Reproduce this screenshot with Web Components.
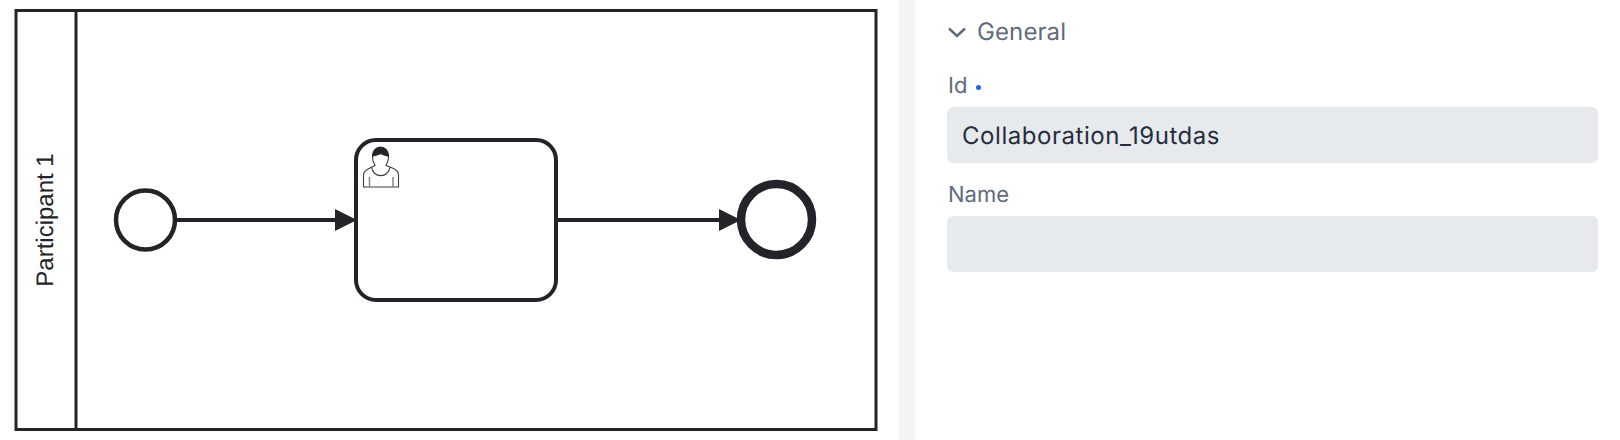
<!DOCTYPE html>
<html>
<head>
<meta charset="utf-8">
<title>Process editor</title>
<style>
  html, body { margin: 0; padding: 0; background: #fff; }
</style>
</head>
<body>
<bpmn-editor>
  <bpmn-canvas slot="canvas"></bpmn-canvas>
  <props-panel slot="panel">
    <props-group label="General">
      <props-field label="Id" value="Collaboration_19utdas" changed></props-field>
      <props-field label="Name"></props-field>
    </props-group>
  </props-panel>
</bpmn-editor>

<script>
class BpmnEditor extends HTMLElement {
  constructor() {
    super();
    this.attachShadow({ mode: 'open' });
    this.shadowRoot.innerHTML = `
      <style>
        :host { display: flex; width: 1620px; height: 440px; overflow: hidden; background: #fff; }
        .canvas { display: block; flex: 0 0 899px; }
        .divider { flex: 0 0 16px; background: #f3f4f6; }
        .panel { display: block; flex: 1; min-width: 0; }
      </style>
      <div class="canvas"><slot name="canvas"></slot></div>
      <div class="divider"></div>
      <div class="panel"><slot name="panel"></slot></div>
    `;
  }
}

class BpmnCanvas extends HTMLElement {
  constructor() {
    super();
    this.attachShadow({ mode: 'open' });
    this.shadowRoot.innerHTML = `
      <style>
        :host { display: block; width: 899px; height: 440px; }
        svg { display: block; }
        text { font-family: "Liberation Sans", Arial, sans-serif; font-size: 24px; fill: #22242a; text-rendering: geometricPrecision; }
      </style>
      <svg width="899" height="440" viewBox="0 0 899 440" fill="none" stroke="#22242a">
        <rect x="16" y="10.5" width="860" height="419" stroke-width="3"/>
        <path d="M76 10V430" stroke-width="3"/>
        <text transform="translate(53 220) rotate(-90)" text-anchor="middle" stroke="none">Participant 1</text>

        <circle cx="145.5" cy="220" r="29.5" stroke-width="4.5" fill="#fff"/>
        <path d="M177 220H337" stroke-width="4"/>
        <path d="M335 209L357 220L335 231Z" fill="#22242a" stroke="none"/>

        <rect x="356" y="140" width="200" height="160" rx="20" stroke-width="4" fill="none"/>
        <g stroke-width="1.1" stroke="#3a3c42" fill="#fff">
          <path d="M363.5 187V175C363.5 171.5 366 170 369 168.500L375 165.500C373.500 163 372.500 160 372.500 157C372.500 152 376 148.500 380.500 148.500C385 148.500 388.500 152 388.500 157C388.500 160 387.500 163 386 165.500L393.500 168.500C396.500 170 398.500 171.500 398.500 175V187Z"/>
          <path d="M372.500 156C375 155.500 378 155 380.500 153.500C383 155 386 155.500 388.500 156C388.500 151 385 147 380.500 147C376 147 372.500 151 372.500 156Z" fill="#22242a" stroke="#22242a"/>
          <path d="M371.500 167C373 178.500 388.500 178.500 390 167" fill="none"/>
          <path d="M369.500 177V187M393 177V187" fill="none" stroke="#85878b" stroke-width="1.500"/>
        </g>

        <path d="M557 220H721" stroke-width="4"/>
        <path d="M719 209L741 220L719 231Z" fill="#22242a" stroke="none"/>
        <circle cx="776.500" cy="219.500" r="35.500" stroke-width="8.500" fill="none"/>
      </svg>
    `;
  }
}

class PropsPanel extends HTMLElement {
  constructor() {
    super();
    this.attachShadow({ mode: 'open' });
    this.shadowRoot.innerHTML = `
      <style>
        :host {
          display: block;
          padding: 16px 22px 0 32px;
          font-family: Inter, "Liberation Sans", sans-serif;
          text-rendering: geometricPrecision;
        }
      </style>
      <slot></slot>
    `;
  }
}

class PropsGroup extends HTMLElement {
  constructor() {
    super();
    this.attachShadow({ mode: 'open' });
  }

  connectedCallback() {
    this.render();
  }

  render() {
    const label = this.getAttribute('label') || '';
    this.shadowRoot.innerHTML = `
      <style>
        :host { display: block; }
        .head {
          display: flex;
          align-items: center;
          gap: 11px;
          height: 32px;
          margin-bottom: 23px;
          color: #5f6b7c;
          font-size: 24px;
          letter-spacing: 0.1px;
          line-height: 32px;
        }
        svg { display: block; margin-left: 1px; }
        .body { display: flex; flex-direction: column; gap: 17px; }
      </style>
      <div class="head">
        <svg width="18" height="11" viewBox="0 0 18 11" fill="none" stroke="#5f6b7c" stroke-width="2.400">
          <path d="M1 1.500L9 9L17 1.500"/>
        </svg>
        <span>${label}</span>
      </div>
      <div class="body"><slot></slot></div>
    `;
  }
}

class PropsField extends HTMLElement {
  constructor() {
    super();
    this.attachShadow({ mode: 'open' });
  }

  connectedCallback() {
    this.render();
  }

  render() {
    const label = this.getAttribute('label') || '';
    const value = this.getAttribute('value') || '';
    const changed = this.hasAttribute('changed');
    this.shadowRoot.innerHTML = `
      <style>
        :host { display: block; }
        .label {
          display: flex;
          align-items: center;
          gap: 9px;
          height: 30px;
          margin-bottom: 6px;
          padding-left: 1px;
          color: #5f6b7c;
          font-size: 22px;
          line-height: 30px;
        }
        .dot { width: 5px; height: 5px; border-radius: 50%; background: #2563eb; margin-top: 2px; }
        .input {
          height: 54px;
          padding: 2px 15px 0;
          border-radius: 6px;
          background: #e7eaed;
          color: #262d3d;
          font-size: 24px;
          letter-spacing: 0.55px;
          line-height: 54px;
          white-space: nowrap;
        }
      </style>
      <div class="label"><span>${label}</span>${changed ? '<i class="dot"></i>' : ''}</div>
      <div class="input">${value}</div>
    `;
  }
}

customElements.define('bpmn-editor', BpmnEditor);
customElements.define('bpmn-canvas', BpmnCanvas);
customElements.define('props-panel', PropsPanel);
customElements.define('props-group', PropsGroup);
customElements.define('props-field', PropsField);
</script>
</body>
</html>
